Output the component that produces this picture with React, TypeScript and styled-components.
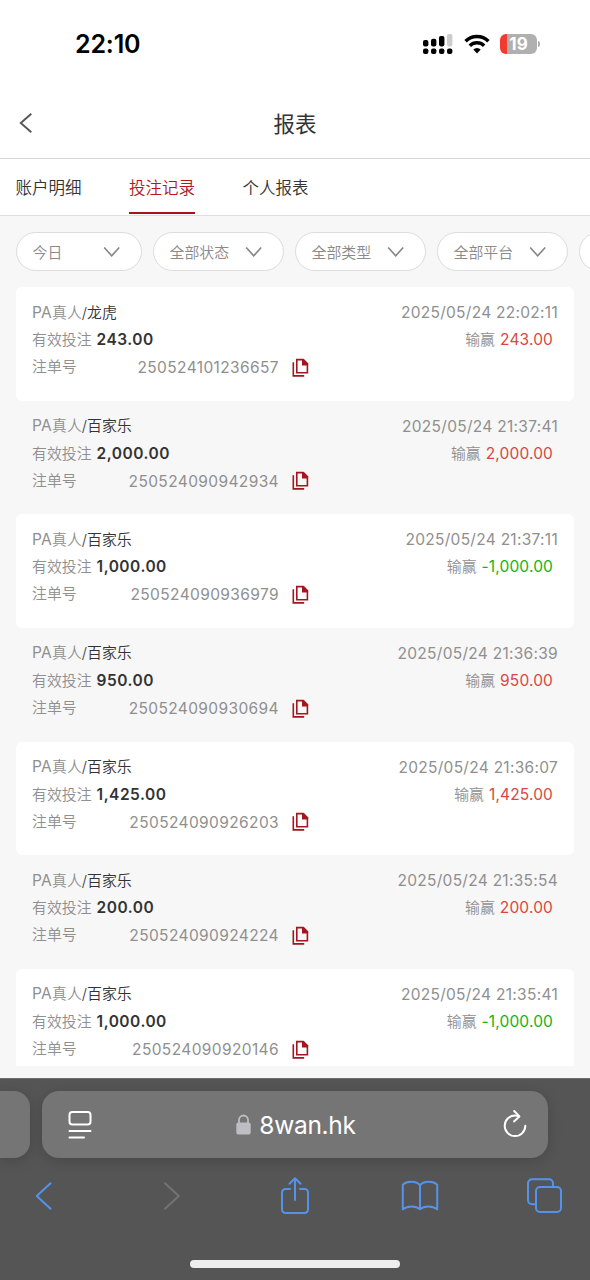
import styled, { createGlobalStyle } from 'styled-components';

interface Bet {
  game: string;
  time: string;
  amount: string;
  profit: string;
  orderNo: string;
}

const bets: Bet[] = [
  { game: '龙虎', time: '2025/05/24 22:02:11', amount: '243.00', profit: '243.00', orderNo: '250524101236657' },
  { game: '百家乐', time: '2025/05/24 21:37:41', amount: '2,000.00', profit: '2,000.00', orderNo: '250524090942934' },
  { game: '百家乐', time: '2025/05/24 21:37:11', amount: '1,000.00', profit: '-1,000.00', orderNo: '250524090936979' },
  { game: '百家乐', time: '2025/05/24 21:36:39', amount: '950.00', profit: '950.00', orderNo: '250524090930694' },
  { game: '百家乐', time: '2025/05/24 21:36:07', amount: '1,425.00', profit: '1,425.00', orderNo: '250524090926203' },
  { game: '百家乐', time: '2025/05/24 21:35:54', amount: '200.00', profit: '200.00', orderNo: '250524090924224' },
  { game: '百家乐', time: '2025/05/24 21:35:41', amount: '1,000.00', profit: '-1,000.00', orderNo: '250524090920146' },
];

const tabs = ['账户明细', '投注记录', '个人报表'];
const filters = [
  { label: '今日', width: 126 },
  { label: '全部状态', width: 131 },
  { label: '全部类型', width: 131 },
  { label: '全部平台', width: 131 },
  { label: '', width: 131 },
];

const CopyIcon = () => (
  <svg width="17" height="19" viewBox="0 0 17 19" fill="none" stroke="#a3161f" strokeWidth="1.6">
    <path d="M4.8 1.6h6.4l4.2 4.2v9H4.8z" />
    <path d="M10 .9h1.7l4.4 4.5v2H10z" fill="#a3161f" stroke="none" />
    <path d="M1.3 4.2v13.7h10.9" />
  </svg>
);

const App = () => {
  return (
    <Screen>
      <GlobalStyle />
      <StatusBar>
        <Clock>22:10</Clock>
        <StatusIcons>
          <svg width="30" height="22" viewBox="0 0 30 22">
            <rect x="0" y="7" width="5.4" height="6.4" rx="2" />
            <rect x="8" y="5.8" width="5.4" height="7.6" rx="2" />
            <rect x="16" y="3" width="5.4" height="10.4" rx="1.8" />
            <rect x="24" y="1" width="5.4" height="12.4" rx="1.8" fill="#ccc" />
            <rect x="0" y="15.5" width="5.4" height="5.6" rx="2" />
            <rect x="8" y="15.5" width="5.4" height="5.6" rx="2" />
            <rect x="16" y="15.5" width="5.4" height="5.6" rx="2" />
            <rect x="24" y="15.5" width="5.4" height="5.6" rx="2" />
          </svg>
          <svg width="26" height="20" viewBox="0 0 26 20" fill="none" stroke="#000" strokeWidth="3.5">
            <path d="M1.6 7.2a16.2 16.2 0 0 1 22.8 0" />
            <path d="M5.8 11.7a10.2 10.2 0 0 1 14.4 0" />
            <path d="M13 19.4l-3.7-3.8a5.2 5.2 0 0 1 7.4 0z" fill="#000" stroke="none" />
          </svg>
          <Battery>
            <BatteryBody>19</BatteryBody>
            <BatteryCap />
          </Battery>
        </StatusIcons>
      </StatusBar>

      <Header>
        <svg width="14" height="22" viewBox="0 0 14 22" fill="none" stroke="#555" strokeWidth="1.9">
          <path d="M12.3 1.8L1.8 11l10.5 9.2" />
        </svg>
        <Title>报表</Title>
      </Header>

      <TabBar>
        {tabs.map((tab, i) => (
          <Tab key={tab} $active={i === 1}>
            {tab}
          </Tab>
        ))}
      </TabBar>

      <Content>
        <FilterBar>
          {filters.map((filter, i) => (
            <Filter key={i} $width={filter.width}>
              {filter.label}
              <svg width="18" height="12" viewBox="0 0 18 12" fill="none" stroke="#858585" strokeWidth="1.6">
                <path d="M1.2 1.5L8.7 9.8l7.5-8.3" />
              </svg>
            </Filter>
          ))}
        </FilterBar>
        <BetList>
          {bets.map((bet, i) => (
            <BetCard key={bet.orderNo} $white={i % 2 === 0}>
              <BetRow>
                <span>
                  <Digits>PA</Digits>真人<Game>/{bet.game}</Game>
                </span>
                <Digits>{bet.time}</Digits>
              </BetRow>
              <BetRow>
                <span>
                  有效投注
                  <Amount>{bet.amount}</Amount>
                </span>
                <span>
                  输赢
                  <Profit $negative={bet.profit.startsWith('-')}>{bet.profit}</Profit>
                </span>
              </BetRow>
              <BetRow>
                <Order>
                  注单号
                  <OrderNo>{bet.orderNo}</OrderNo>
                </Order>
                <CopyIcon />
              </BetRow>
            </BetCard>
          ))}
        </BetList>
      </Content>

      <Browser>
        <AddressRow>
          <PrevPage />
          <AddressBar>
            <svg width="24" height="30" viewBox="0 0 24 30" fill="none" stroke="#fff" strokeWidth="2" strokeLinecap="round">
              <rect x="1.5" y="2" width="21" height="12.5" rx="2.8" />
              <path d="M1.5 21h21M1.5 27.5h14.5" />
            </svg>
            <Host>
              <svg width="15" height="21" viewBox="0 0 15 21">
                <rect x="0.3" y="8.6" width="14.4" height="12" rx="2" fill="#bdbdc2" />
                <path d="M3 9V6a4.5 4.5 0 0 1 9 0v3" fill="none" stroke="#bdbdc2" strokeWidth="1.8" />
              </svg>
              8wan.hk
            </Host>
            <svg width="24" height="30" viewBox="0 0 24 30" fill="none" stroke="#fff" strokeWidth="2" strokeLinecap="round" strokeLinejoin="round">
              <path d="M22.3 15.8A10.3 10.3 0 1 1 12 5.5c1.3 0 2.6.2 3.7.6" />
              <path d="M11.2 1l5.2 5.4-5.4 5" />
            </svg>
          </AddressBar>
        </AddressRow>
        <Toolbar>
          <svg viewBox="0 0 38 38">
            <path d="M25.5 6.2L11.8 19l13.7 12.8" />
          </svg>
          <DisabledIcon viewBox="0 0 38 38">
            <path d="M15 6.2L28.8 19 15 31.8" />
          </DisabledIcon>
          <svg viewBox="0 0 38 38">
            <path d="M14 12h-4.5A3.5 3.5 0 0 0 6 15.5v17A3.5 3.5 0 0 0 9.500 36h19a3.500 3.500 0 0 0 3.500-3.500V15.500a3.500 3.500 0 0 0-3.500-3.500H24" />
            <path d="M19 23V1.500M13.500 6.800L19 1.300l5.500 5.500" />
          </svg>
          <svg viewBox="0 0 38 38">
            <path d="M19 8.300C15.500 3.800 6 3.600 1.800 7.600v24.700c4.800-3.700 13.200-3.700 17.200 0 4-3.700 12.400-3.700 17.200 0V7.600C32 3.600 22.500 3.800 19 8.300zM19 8.300v24" />
          </svg>
          <svg viewBox="0 0 38 38">
            <rect x="10" y="10" width="25" height="25" rx="4" />
            <path d="M10 27.300H6a4 4 0 0 1-4-4V6.300a4 4 0 0 1 4-4h17a4 4 0 0 1 4 4V10" />
          </svg>
        </Toolbar>
        <HomeIndicator />
      </Browser>
    </Screen>
  );
};

const GlobalStyle = createGlobalStyle`
  * {
    box-sizing: border-box;
  }

  body {
    margin: 0;
    font-family: Inter, 'Noto Sans CJK SC', sans-serif;
    color: #333;
  }

  svg {
    display: block;
    flex-shrink: 0;
  }
`;

const Screen = styled.div`
  display: flex;
  flex-direction: column;
  width: 590px;
  height: 1280px;
  overflow: hidden;
  background-color: #fff;
`;

const StatusBar = styled.div`
  display: flex;
  justify-content: space-between;
  align-items: center;
  height: 88px;
  padding: 0 50px 0 75px;
`;

const Clock = styled.span`
  font-size: 25px;
  font-weight: 600;
  letter-spacing: -0.15px;
  color: #000;
`;

const StatusIcons = styled.div`
  display: flex;
  align-items: center;
  gap: 10.5px;
`;

const Battery = styled.div`
  display: flex;
  align-items: center;
  gap: 1px;
`;

const BatteryBody = styled.div`
  width: 37px;
  height: 20px;
  border-radius: 6px;
  background: linear-gradient(90deg, #f23b30 7px, #b0b0b0 7px);
  color: #fff;
  font-size: 17px;
  font-weight: 700;
  line-height: 20px;
  text-align: center;
`;

const BatteryCap = styled.div`
  width: 2px;
  height: 6px;
  border-radius: 0 2px 2px 0;
  background-color: #b0b0b0;
`;

const Header = styled.header`
  display: grid;
  grid-template-columns: 14px 1fr 14px;
  align-items: center;
  height: 71px;
  padding: 0 19px;
  border-bottom: 1px solid #d8d8d8;
`;

const Title = styled.h1`
  margin: 0;
  padding-top: 2px;
  font-size: 21.5px;
  font-weight: 400;
  line-height: 32px;
  text-align: center;
`;

const TabBar = styled.nav`
  display: flex;
  gap: 47.5px;
  height: 57px;
  padding: 0 15.5px;
  border-bottom: 1px solid #dedede;
`;

const Tab = styled.div<{ $active: boolean }>`
  height: 55px;
  border-bottom: 2px solid ${({ $active }) => ($active ? '#a3161f' : 'transparent')};
  font-size: 16.5px;
  line-height: 58px;
  font-weight: 350;
  color: ${({ $active }) => ($active ? '#b5161f' : '#333')};
`;

const Content = styled.main`
  height: 862px;
  overflow: hidden;
  background-color: #f7f7f7;
`;

const FilterBar = styled.div`
  display: flex;
  gap: 11px;
  margin: 16px 0 16px 15.5px;
  overflow: hidden;
`;

const Filter = styled.div<{ $width: number }>`
  display: flex;
  flex-shrink: 0;
  justify-content: space-between;
  align-items: center;
  width: ${({ $width }) => $width}px;
  height: 39px;
  padding: 0 20px 0 16px;
  border: 1px solid #dcdcdc;
  border-radius: 20px;
  background-color: #fff;
  font-size: 14.9px;
  font-weight: 350;
  color: #8a8a8a;
`;

const BetList = styled.div`
  height: 778.5px;
  margin: 0 16px;
  overflow: hidden;
`;

const BetCard = styled.div<{ $white: boolean }>`
  height: 113.65px;
  padding: 12px 16px 0;
  border-radius: 6px;
  background-color: ${({ $white }) => ($white ? '#fff' : 'transparent')};
`;

const BetRow = styled.div`
  display: flex;
  justify-content: space-between;
  align-items: center;
  height: 27.5px;
  font-size: 14.9px;
  font-weight: 350;
  line-height: 27.5px;
  color: #8f8f8f;
  white-space: nowrap;

  &:last-child {
    justify-content: flex-start;
    gap: 12.5px;
  }

  svg {
    margin-bottom: 1px;
  }
`;

const Game = styled.span`
  color: #333;
`;

const Digits = styled.span`
  font-size: 15.5px;
  font-weight: 380;
  letter-spacing: 0.28px;
`;

const OrderNo = styled(Digits)`
  letter-spacing: 0.38px;
`;

const Amount = styled(Digits)`
  margin-left: 5px;
  font-weight: 600;
  letter-spacing: 0.5px;
  color: #333;
`;

const Profit = styled(Digits)<{ $negative: boolean }>`
  margin: 0 5px;
  font-weight: 400;
  letter-spacing: 0.15px;
  color: ${({ $negative }) => ($negative ? '#12b312' : '#d9473f')};
`;

const Order = styled.span`
  display: flex;
  justify-content: space-between;
  width: 247px;
`;

const Browser = styled.footer`
  height: 202px;
  padding-top: 12px;
  border-top: 1px solid #707070;
  background-color: #555;
`;

const AddressRow = styled.div`
  display: flex;
  gap: 12px;
`;

const PrevPage = styled.div`
  width: 30px;
  height: 67px;
  border-radius: 0 16px 16px 0;
  background-color: #757575;
  box-shadow: 0 3px 14px rgba(0, 0, 0, 0.16);
`;

const AddressBar = styled.div`
  display: flex;
  justify-content: space-between;
  align-items: center;
  width: 506px;
  height: 67px;
  padding: 0 21px 0 26px;
  border-radius: 17px;
  background-color: #757575;
  box-shadow: 0 3px 14px rgba(0, 0, 0, 0.16);
`;

const Host = styled.div`
  display: flex;
  align-items: center;
  gap: 8px;
  margin-right: 3px;
  font-size: 24.5px;
  letter-spacing: -0.3px;
  color: #fff;
`;

const Toolbar = styled.div`
  display: flex;
  justify-content: space-between;
  align-items: center;
  height: 75px;
  padding: 0 26px 0 25px;

  svg {
    width: 38px;
    height: 38px;
    fill: none;
    stroke: #5592ea;
    stroke-width: 2;
    stroke-linecap: round;
    stroke-linejoin: round;
  }
`;

const DisabledIcon = styled.svg`
  && {
    stroke: #737373;
  }
`;

const HomeIndicator = styled.div`
  width: 210px;
  height: 8px;
  margin: 27px auto 0;
  border-radius: 4px;
  background-color: #eee;
`;

export default App;
